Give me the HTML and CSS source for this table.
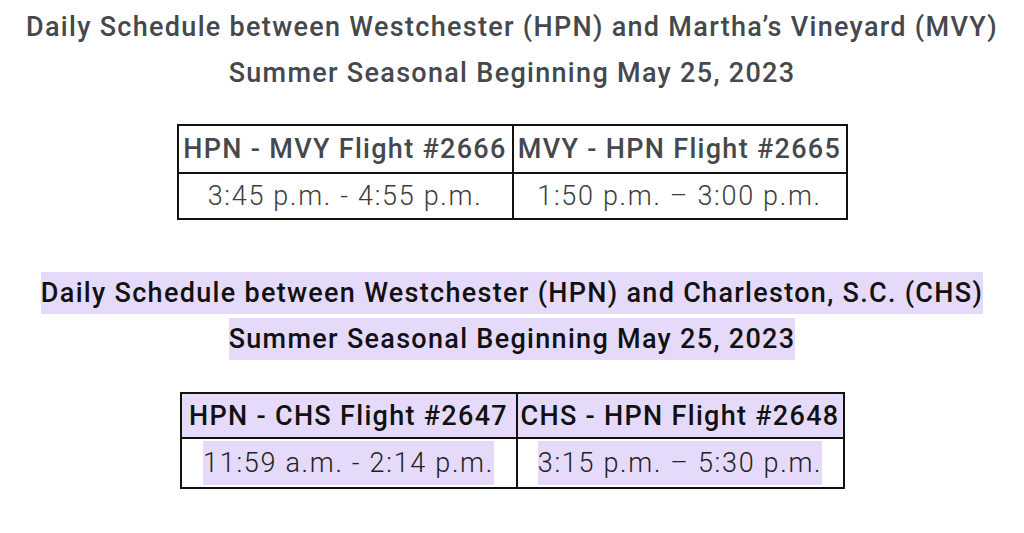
FILE: index.html
```html
<!DOCTYPE html>
<html>
<head>
<meta charset="utf-8">
<link rel="stylesheet" href="styles.css">
</head>
<body>
<main class="page">
  <section class="block block-mvy">
    <h2 class="title">
      <span class="line">Daily Schedule between Westchester (HPN) and Martha’s Vineyard (MVY)</span><br>
      <span class="line">Summer Seasonal Beginning May 25, 2023</span>
    </h2>
    <table class="sched sched-mvy">
      <tr class="head"><th class="c1">HPN - MVY Flight #2666</th><th class="c2">MVY - HPN Flight #2665</th></tr>
      <tr class="body"><td class="c1">3:45 p.m. - 4:55 p.m.</td><td class="c2">1:50 p.m. – 3:00 p.m.</td></tr>
    </table>
  </section>
  <section class="block block-chs">
    <h2 class="title hl">
      <span class="line">Daily Schedule between Westchester (HPN) and Charleston, S.C. (CHS)</span><br>
      <span class="line">Summer Seasonal Beginning May 25, 2023</span>
    </h2>
    <table class="sched sched-chs">
      <tr class="head"><th class="c1">HPN - CHS Flight #2647</th><th class="c2">CHS - HPN Flight #2648</th></tr>
      <tr class="body"><td class="c1"><span class="mark">11:59 a.m. - 2:14 p.m.</span></td><td class="c2"><span class="mark">3:15 p.m. – 5:30 p.m.</span></td></tr>
    </table>
  </section>
</main>
</body>
</html>
```
FILE: styles.css
```css
html, body { margin: 0; padding: 0; background: #fff; }
body { font-family: Roboto, "Liberation Sans", sans-serif; }
.page { width: 1024px; }
.block { display: flex; flex-direction: column; align-items: center; }
.title {
  margin: 0;
  font-size: 27px;
  font-weight: 500;
  letter-spacing: 1.3px;
  line-height: 46px;
  text-align: center;
  color: #45484d;
  white-space: nowrap;
}
.block-mvy { padding-top: 4px; }
.block-chs { padding-top: 50px; }
.title.hl { color: #111; }
.title.hl .line { background: #e6dafa; padding: 5px 0; }
.sched {
  border-collapse: collapse;
  margin-top: 28px;
}
.sched th, .sched td {
  border: 2px solid #111;
  padding: 0;
  font-size: 27px;
  text-align: center;
  white-space: nowrap;
}
.sched th { font-weight: 500; letter-spacing: 1.3px; color: #45484d; }
.sched td { font-weight: 300; letter-spacing: 1.7px; color: #3c3c3c; }
.sched-mvy .head th { height: 46px; }
.sched-mvy .body td { height: 44px; }
.sched-mvy .c1 { width: 333px; }
.sched-mvy .c2 { width: 332px; }
.sched-chs { margin-top: 30px; }
.sched-chs .head th { height: 43px; background: #e6dafa; color: #111; }
.sched-chs .body td { height: 48px; color: #222; }
.sched-chs .c1 { width: 334px; }
.sched-chs .c2 { width: 325px; }
.mark { background: #e6dafa; padding: 6px 0; }
```
